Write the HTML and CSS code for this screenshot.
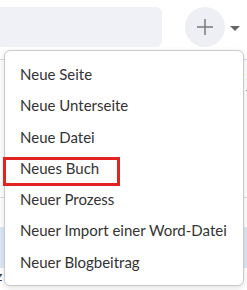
FILE: index.html
```html
<!DOCTYPE html>
<html lang="de">
<head>
<meta charset="utf-8">
<link rel="stylesheet" href="styles.css">
</head>
<body>
<div class="page">
  <div class="header">
    <div class="search"></div>
    <button class="add-btn" aria-label="Neu">
      <svg width="18" height="18" viewBox="0 0 18 18"><path d="M9 1V17M1 9H17" stroke="#7a7a7a" stroke-width="1.5" fill="none"/></svg>
    </button>
    <span class="caret"></span>
  </div>
  <div class="content">
    <div class="help-row"><span class="help">?</span></div>
    <div class="table-head"></div>
    <div class="row-selected"></div>
    <div class="footer-text">z</div>
  </div>
</div>
<ul class="menu">
  <li class="item">Neue Seite</li>
  <li class="item">Neue Unterseite</li>
  <li class="item">Neue Datei</li>
  <li class="item">Neues Buch</li>
  <li class="item">Neuer Prozess</li>
  <li class="item">Neuer Import einer Word-Datei</li>
  <li class="item">Neuer Blogbeitrag</li>
</ul>
<div class="highlight"></div>
</body>
</html>
```
FILE: styles.css
```css
html, body {
  margin: 0;
  padding: 0;
  background: #ffffff;
  overflow: hidden;
  width: 247px;
  height: 290px;
  font-family: Lato, "Liberation Sans", sans-serif;
}
.page {
  width: 247px;
  height: 290px;
  position: relative;
}
.header {
  display: flex;
  align-items: center;
  padding-top: 7px;
  height: 40px;
}
.search {
  width: 162px;
  height: 40px;
  background: #f0f1f6;
  border-radius: 0 6px 6px 0;
}
.add-btn {
  margin-left: 23px;
  width: 40px;
  height: 40px;
  border-radius: 50%;
  border: none;
  background: #eeeff5;
  padding: 0;
  display: flex;
  align-items: center;
  justify-content: center;
}
.caret {
  margin-left: 5px;
  width: 0;
  height: 0;
  border-left: 5px solid transparent;
  border-right: 5px solid transparent;
  border-top: 5px solid #666;
  margin-top: 2px;
}
.content {
  margin-top: 12px;
  border-top: 1px solid #d6dde8;
}
.help-row {
  display: flex;
  justify-content: flex-end;
  height: 40px;
  padding-top: 14px;
  box-sizing: border-box;
}
.help {
  font-size: 15px;
  color: #555;
  margin-right: -6px;
  text-decoration: underline;
}
.table-head {
  height: 97px;
  border-bottom: 1px solid #dddddd;
}
.row-selected {
  margin-top: 29px;
  height: 41px;
  background: #dde8f6;
}
.footer-text {
  font-size: 14px;
  color: #333;
  margin-left: -4px;
  line-height: 16px;
}
.menu {
  position: absolute;
  left: 4px;
  top: 50px;
  width: 240px;
  height: 236px;
  box-sizing: border-box;
  margin: 0;
  padding: 8px 0 0 0;
  list-style: none;
  background: #ffffff;
  border: 1px solid #c9c9c9;
  border-radius: 6px;
  box-shadow: 0 2px 6px rgba(0,0,0,0.12);
}
.item {
  padding-left: 15px;
  font-size: 15px;
  line-height: 31.3px;
  color: #333333;
  white-space: nowrap;
}
.highlight {
  position: absolute;
  left: 3px;
  top: 157px;
  width: 117px;
  height: 29px;
  box-sizing: border-box;
  border: 3px solid #e32222;
}
```
